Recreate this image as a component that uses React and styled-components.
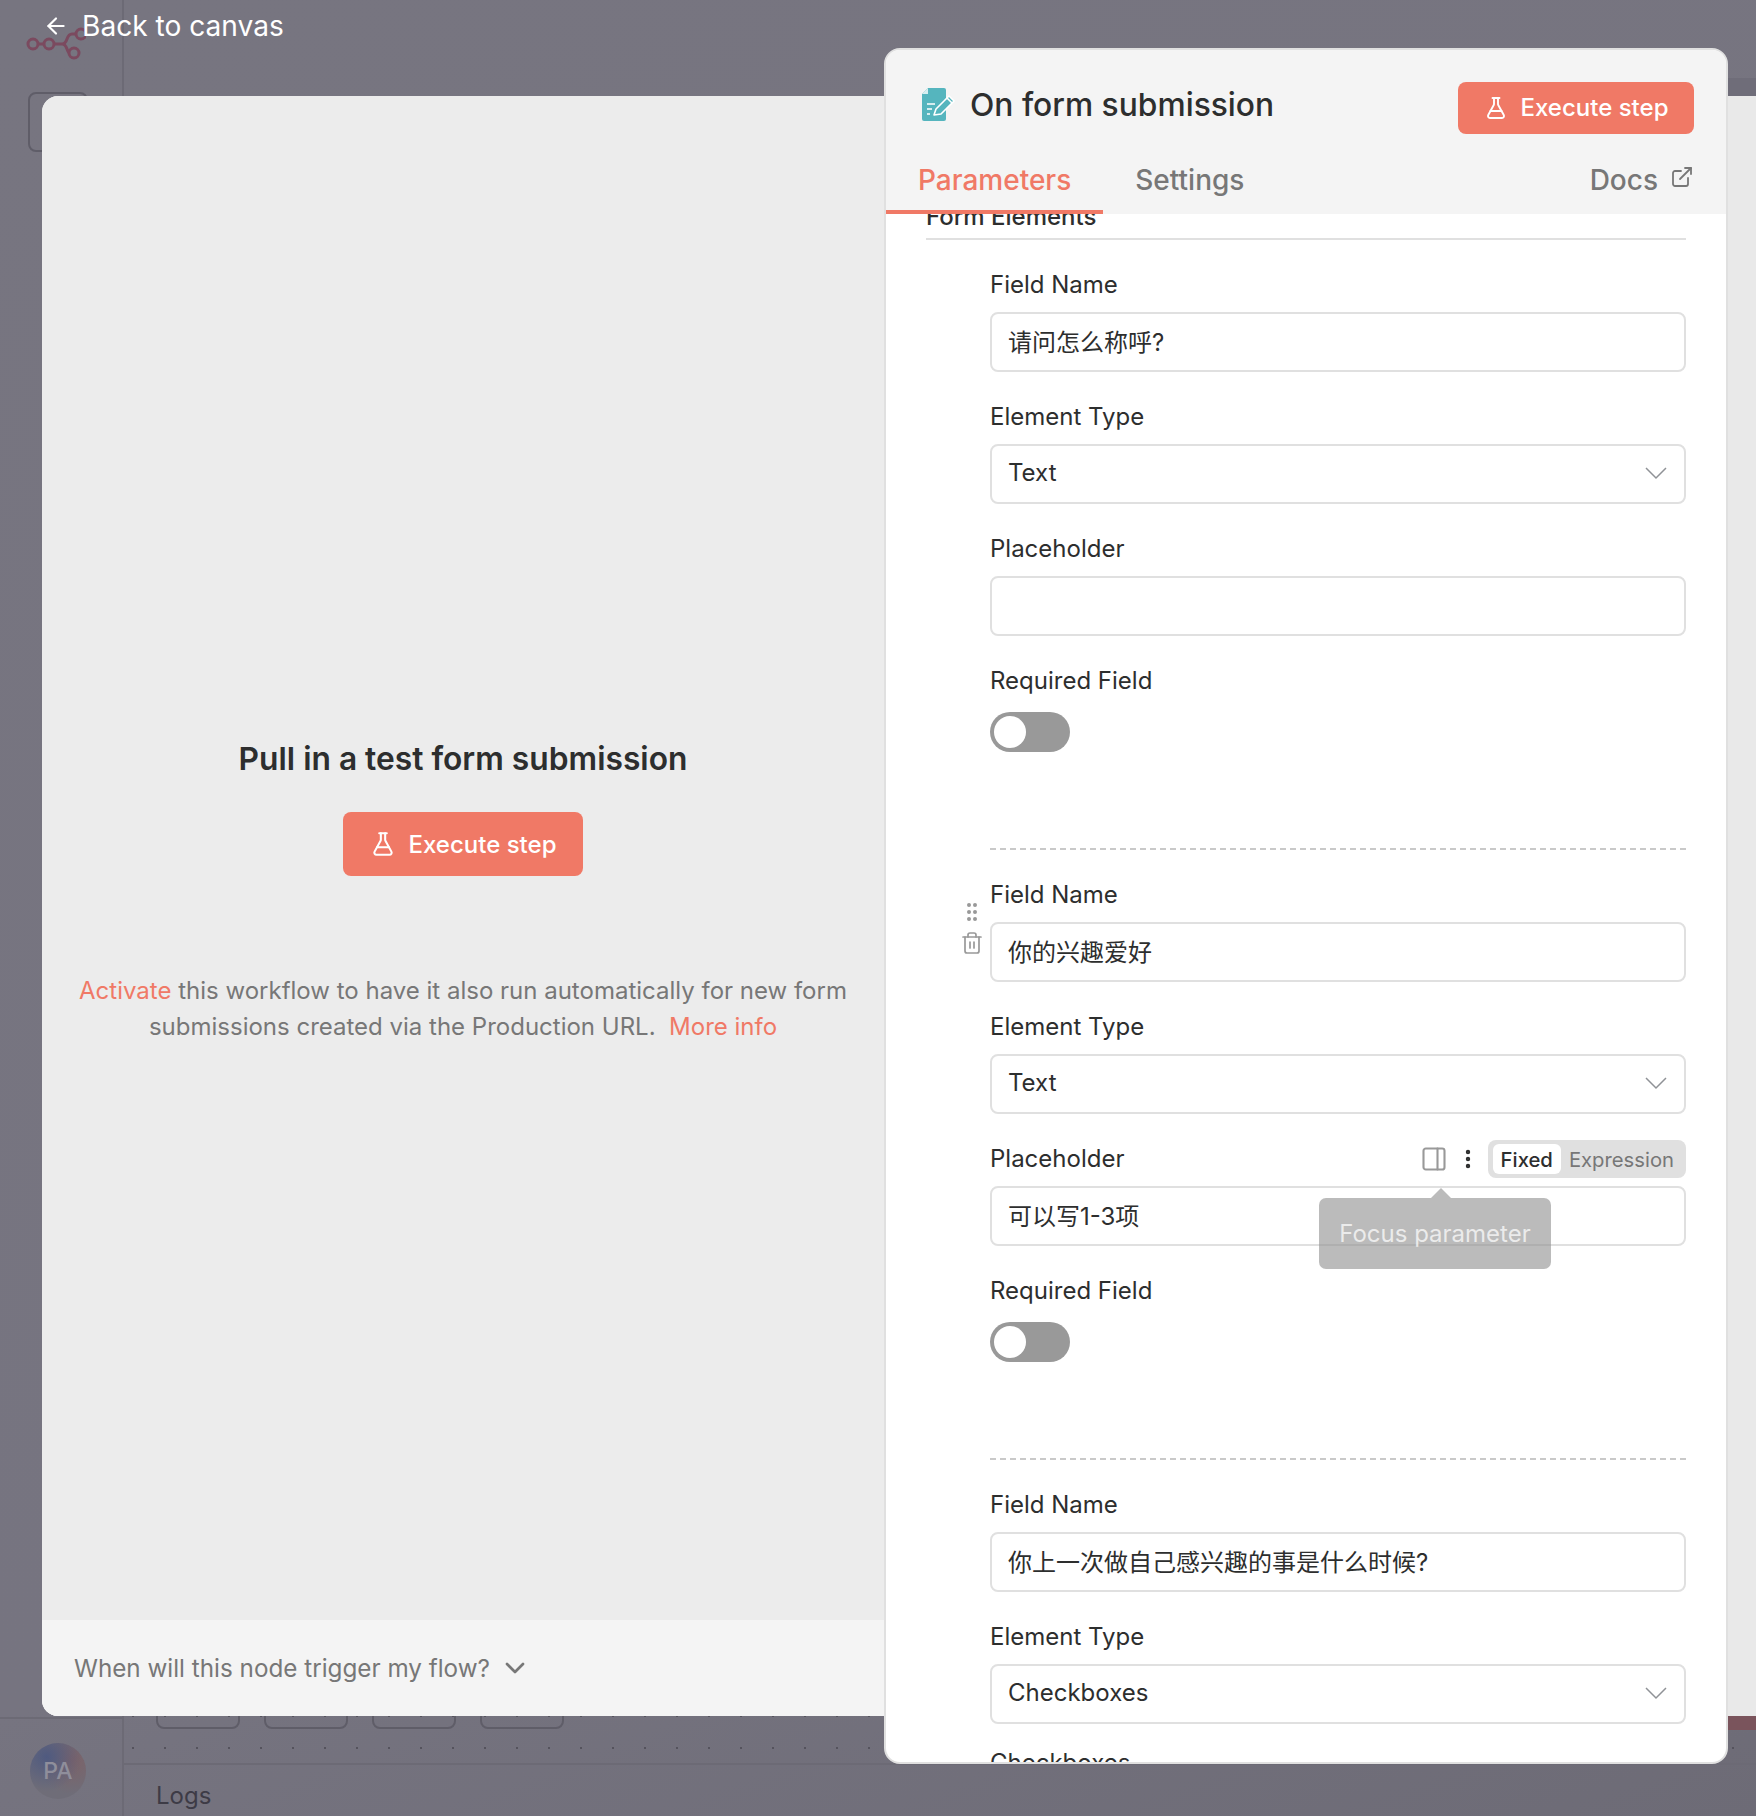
import React from 'react';
import styled, { createGlobalStyle } from 'styled-components';
import { ArrowLeft, ChevronDown, EllipsisVertical, ExternalLink, FlaskConical, GripVertical, PanelRight, Trash2 } from 'lucide-react';

const GlobalStyle = createGlobalStyle`
html, body {
    margin: 0;
    padding: 0;
}
body {
    font-family: Inter, "Noto Sans CJK SC", sans-serif;
    color: #2d2e2e;
}
* {
    box-sizing: border-box;
}
`;

const NodeLogo = () => (
    <svg width="60" height="40" viewBox="0 0 60 40" fill="none" stroke="#7b4a5f" strokeWidth="3">
        <circle cx="7" cy="20" r="5" />
        <circle cx="23" cy="20" r="5" />
        <circle cx="55" cy="10" r="5" />
        <circle cx="48" cy="29" r="5" />
        <path d="M12 20h6M28 20h8c3 0 4-2 5-5s2-5 5-5h4M36 20c3 0 4 2 5 5s2 4 3 4" />
    </svg>
);

const FormIcon = () => (
    <svg width="34" height="34" viewBox="0 0 34 34">
        <path d="M7 1h16a2 2 0 0 1 2 2v29a2 2 0 0 1-2 2H3a2 2 0 0 1-2-2V7z" fill="#55b5be" />
        <path d="M7 1v6H1z" fill="#d7eef0" />
        <path d="M6 17h8M6 22h5M6 27h3" stroke="#fff" strokeWidth="1.6" fill="none" />
        <path d="M13 28l2-6 13-13 5 5-13 13z" fill="#55b5be" stroke="#fff" strokeWidth="1.6" strokeLinejoin="round" />
        <path d="M26 11l5 5" stroke="#fff" strokeWidth="1.6" />
    </svg>
);

const SelectArrow = () => (
    <svg width="24" height="14" viewBox="0 0 24 14" fill="none" stroke="#8f9296" strokeWidth="1.5">
        <path d="M2 2l10 10L22 2" />
    </svg>
);

const ParamField = ({ label, value, extra, children }) => (
    <Field>
        <LabelRow>
            <FieldLabel>{label}</FieldLabel>
            {extra}
        </LabelRow>
        {children || <TextBox>{value}</TextBox>}
    </Field>
);

const SelectField = ({ label, value }) => (
    <ParamField label={label}>
        <SelectBox>
            {value}
            <SelectArrow />
        </SelectBox>
    </ParamField>
);

const RequiredField = () => (
    <Field>
        <LabelRow>
            <FieldLabel>Required Field</FieldLabel>
        </LabelRow>
        <Toggle>
            <Knob />
        </Toggle>
    </Field>
);

const ExecuteButton = ({ big }) => (
    <RunButton $big={big}>
        <FlaskConical size={big ? 26 : 24} strokeWidth={1.9} />
        Execute step
    </RunButton>
);

const App = () => {
    return (
        <Page>
            <GlobalStyle />

            <Shell>
                <Sidebar>
                    <SideTop>
                        <LogoSlot><NodeLogo /></LogoSlot>
                        <SideBox />
                    </SideTop>
                    <SideBottom>
                        <Avatar>PA</Avatar>
                    </SideBottom>
                </Sidebar>
                <Main>
                    <TopBar />
                    <Canvas>
                        <CanvasButton />
                        <CanvasButton />
                        <CanvasButton />
                        <CanvasButton />
                    </Canvas>
                    <LogsBar>Logs</LogsBar>
                </Main>
            </Shell>

            <HeaderBand />
            <RedStrip />

            <BackLink>
                <ArrowLeft size={26} strokeWidth={2} />
                Back to canvas
            </BackLink>

            <Modal>
                <InputPane>
                    <InputBody>
                        <PaneTitle>Pull in a test form submission</PaneTitle>
                        <ExecuteButton big />
                        <PaneText>
                            <Coral>Activate</Coral> this workflow to have it also run automatically for new form
                            submissions created via the Production URL.&nbsp; <Coral>More info</Coral>
                        </PaneText>
                    </InputBody>
                    <InputFooter>
                        When will this node trigger my flow?
                        <ChevronDown size={32} strokeWidth={2} />
                    </InputFooter>
                </InputPane>
            </Modal>

            <Panel>
                <PanelHead>
                    <TitleRow>
                        <NodeTitle>
                            <FormIcon />
                            On form submission
                        </NodeTitle>
                        <ExecuteButton />
                    </TitleRow>
                    <Tabs>
                        <Tab $active>Parameters</Tab>
                        <Tab>Settings</Tab>
                        <DocsTab>
                            Docs
                            <ExternalLink size={24} strokeWidth={1.8} />
                        </DocsTab>
                    </Tabs>
                </PanelHead>

                <PanelBody>
                    <SectionTitle>Form Elements</SectionTitle>

                    <Group>
                        <ParamField label="Field Name" value="请问怎么称呼?" />
                        <SelectField label="Element Type" value="Text" />
                        <ParamField label="Placeholder" value="" />
                        <RequiredField />
                    </Group>

                    <Group $divided>
                        <GroupTools>
                            <GripVertical size={24} color="#999" fill="#999" strokeWidth={2} />
                            <Trash2 size={24} color="#999" strokeWidth={1.7} />
                        </GroupTools>
                        <ParamField label="Field Name" value="你的兴趣爱好" />
                        <SelectField label="Element Type" value="Text" />
                        <ParamField
                            label="Placeholder"
                            extra={
                                <Options>
                                    <PanelRight size={28} color="#999" strokeWidth={1.8} />
                                    <EllipsisVertical size={24} color="#2d2e2e" strokeWidth={2.4} />
                                    <ModeSwitch>
                                        <ModeOption $active>Fixed</ModeOption>
                                        <ModeOption>Expression</ModeOption>
                                    </ModeSwitch>
                                </Options>
                            }
                        >
                            <TipAnchor>
                                <TextBox>可以写1-3项</TextBox>
                                <Tooltip>Focus parameter</Tooltip>
                            </TipAnchor>
                        </ParamField>
                        <RequiredField />
                    </Group>

                    <Group $divided>
                        <ParamField label="Field Name" value="你上一次做自己感兴趣的事是什么时候?" />
                        <SelectField label="Element Type" value="Checkboxes" />
                        <LastField>
                            <LabelRow>
                                <FieldLabel>Checkboxes</FieldLabel>
                            </LabelRow>
                        </LastField>
                    </Group>
                </PanelBody>
            </Panel>
        </Page>
    );
};

export default App;


const Page = styled.div`
position: relative;
width: 1756px;
height: 1816px;
overflow: hidden;
background: linear-gradient(160deg, #777580 0%, #767480 70%, #6d6b76 100%);
`;

const Shell = styled.div`
display: flex;
height: 100%;
`;

const Sidebar = styled.aside`
display: flex;
flex-direction: column;
justify-content: space-between;
width: 124px;
border-right: 2px solid #6c6a75;
`;

const SideTop = styled.div`
display: flex;
flex-direction: column;
padding: 24px 0 0 26px;
`;

const LogoSlot = styled.div`
height: 68px;
`;

const SideBox = styled.div`
width: 60px;
height: 60px;
margin-left: 2px;
border: 2px solid #5f5d68;
border-radius: 8px;
`;

const SideBottom = styled.div`
display: flex;
justify-content: center;
height: 99px;
padding: 24px 6px 0 0;
border-top: 2px solid #6c6a75;
`;

const Avatar = styled.div`
display: flex;
align-items: center;
justify-content: center;
width: 56px;
height: 56px;
border-radius: 50%;
background: radial-gradient(circle at 30% 25%, #4f5a80, transparent 60%), radial-gradient(circle at 75% 30%, #7c6268, transparent 60%), #6f6d78;
color: #8f8e9b;
font-size: 23px;
font-weight: 500;
`;

const Main = styled.main`
flex: 1;
display: flex;
flex-direction: column;
`;

const TopBar = styled.div`
flex: none;
height: 96px;
`;

const Canvas = styled.div`
flex: 1;
display: flex;
align-items: flex-end;
gap: 24px;
padding: 0 0 34px 32px;
background-image: radial-gradient(circle, #55535d 1px, transparent 1.2px);
background-size: 32px 32px;
background-position: -7px 4px;
`;

const CanvasButton = styled.div`
width: 84px;
height: 60px;
border: 2px solid #5f5d68;
border-radius: 8px;
`;

const LogsBar = styled.div`
display: flex;
align-items: center;
height: 53px;
padding: 10px 0 0 32px;
border-top: 2px solid #6c6a75;
color: #3d3b46;
font-size: 24px;
`;

const HeaderBand = styled.div`
position: absolute;
top: 78px;
right: 0;
width: 40px;
height: 18px;
background: #6f6d79;
`;

const RedStrip = styled.div`
position: absolute;
top: 1716px;
right: 0;
width: 40px;
height: 14px;
background: #7a545c;
`;

const BackLink = styled.div`
position: absolute;
top: 9px;
left: 43px;
display: flex;
align-items: center;
gap: 13px;
color: #fff;
font-size: 28.1px;
line-height: 34px;
`;

const Modal = styled.section`
position: absolute;
top: 96px;
left: 42px;
width: 1760px;
height: 1620px;
border-radius: 16px 0 0 16px;
background: #e9e9e9;
overflow: hidden;
`;

const InputPane = styled.div`
display: flex;
flex-direction: column;
width: 842px;
height: 100%;
background: #ececec;
`;

const InputBody = styled.div`
flex: 1;
display: flex;
flex-direction: column;
align-items: center;
justify-content: flex-start;
padding: 640px 30px 0;
`;

const PaneTitle = styled.h2`
margin: 0 0 30px;
font-size: 31.75px;
line-height: 46px;
font-weight: 600;
color: #2d2e2e;
`;

const RunButton = styled.button`
display: flex;
align-items: center;
justify-content: center;
gap: 13px;
width: ${({ $big }) => ($big ? '240px' : '236px')};
height: ${({ $big }) => ($big ? '64px' : '52px')};
margin-top: ${({ $big }) => ($big ? '0' : '7px')};
border: 0;
border-radius: 8px;
background: #f07966;
color: #fff;
font-family: inherit;
font-size: 24px;
font-weight: 500;
`;

const PaneText = styled.p`
margin: 97px 0 0;
text-align: center;
color: #777;
font-size: 24px;
line-height: 36px;
`;

const Coral = styled.span`
color: #f07966;
`;

const InputFooter = styled.div`
display: flex;
align-items: center;
gap: 9px;
height: 96px;
padding: 0 0 0 32px;
background: #f4f4f4;
color: #777;
font-size: 24.25px;
`;

const Panel = styled.section`
position: absolute;
top: 48px;
left: 884px;
display: flex;
flex-direction: column;
width: 844px;
height: 1716px;
border: 2px solid #e0e0e0;
border-radius: 16px;
background: #fff;
overflow: hidden;
`;

const PanelHead = styled.header`
flex: none;
height: 164px;
background: #f4f4f4;
`;

const TitleRow = styled.div`
display: flex;
align-items: center;
justify-content: space-between;
height: 106px;
padding: 2px 32px 0 35px;
`;

const NodeTitle = styled.div`
display: flex;
align-items: center;
gap: 15px;
font-size: 31.75px;
font-weight: 450;
color: #2d2e2e;
`;

const Tabs = styled.nav`
display: flex;
align-items: stretch;
height: 58px;
padding: 0 32px 0 0;
`;

const Tab = styled.div`
display: flex;
align-items: center;
padding: 0 32px 6px;
border-bottom: 4px solid ${({ $active }) => ($active ? '#f07966' : 'transparent')};
color: ${({ $active }) => ($active ? '#f07966' : '#777')};
font-size: 28px;
font-weight: 450;
`;

const DocsTab = styled.div`
display: flex;
align-items: center;
gap: 12px;
margin-left: auto;
padding-bottom: 10px;
color: #777;
font-size: 28px;
font-weight: 450;

svg {
    margin-top: -6px;
}
`;

const PanelBody = styled.div`
flex: 1;
min-height: 0;
overflow: hidden;
padding: 0 40px 0 40px;
`;

const SectionTitle = styled.div`
height: 35px;
margin-top: -9px;
border-bottom: 2px solid #e0e0e0;
font-size: 24px;
line-height: 24px;
font-weight: 500;
color: #2d2e2e;
`;

const Group = styled.div`
position: relative;
display: flex;
flex-direction: column;
gap: 30px;
margin-left: 64px;
padding: 30px 0 96px;
border-top: ${({ $divided }) => ($divided ? '2px dashed #c9c9c9' : '0')};
`;

const GroupTools = styled.div`
position: absolute;
top: 50px;
left: -30px;
display: flex;
flex-direction: column;
align-items: center;
gap: 7px;
width: 24px;
`;

const Field = styled.div`
display: flex;
flex-direction: column;
gap: 14px;
`;

const LastField = styled(Field)`
margin-top: -6px;
`;

const LabelRow = styled.div`
display: flex;
align-items: center;
justify-content: space-between;
height: 28px;
padding-top: 2px;
`;

const FieldLabel = styled.label`
font-size: 24px;
line-height: 28px;
color: #2d2e2e;
`;

const TextBox = styled.div`
display: flex;
align-items: center;
height: 60px;
padding: 0 16px 3px;
border: 2px solid #e0e0e0;
border-radius: 8px;
background: #fff;
font-size: 24px;
color: #2d2e2e;
`;

const SelectBox = styled(TextBox)`
justify-content: space-between;
`;

const Toggle = styled.div`
display: flex;
align-items: center;
width: 80px;
height: 40px;
margin-top: 4px;
padding: 0 4px;
border-radius: 20px;
background: #999;
`;

const Knob = styled.div`
width: 32px;
height: 32px;
border-radius: 50%;
background: #fff;
`;

const Options = styled.div`
display: flex;
align-items: center;
gap: 8px;
`;

const ModeSwitch = styled.div`
display: flex;
align-items: center;
height: 38px;
padding: 0 12px 0 5px;
border-radius: 8px;
background: #e0e0e0;
font-size: 20.25px;
`;

const ModeOption = styled.div`
display: flex;
align-items: center;
height: 30px;
padding: ${({ $active }) => ($active ? '0 8px' : '0 0 0 8px')};
border-radius: 6px;
background: ${({ $active }) => ($active ? '#fff' : 'transparent')};
color: ${({ $active }) => ($active ? '#2d2e2e' : '#777')};
font-weight: ${({ $active }) => ($active ? 500 : 400)};
`;

const TipAnchor = styled.div`
position: relative;
`;

const Tooltip = styled.div`
position: absolute;
top: 12px;
left: 329px;
display: flex;
align-items: center;
justify-content: center;
width: 232px;
height: 71px;
border-radius: 7px;
background: rgba(145, 145, 145, 0.62);
color: rgba(255, 255, 255, 0.72);
font-size: 24px;

&::before {
    content: '';
    position: absolute;
    top: -10px;
    left: 112px;
    border: 10px solid transparent;
    border-top: 0;
    border-bottom-color: rgba(145, 145, 145, 0.62);
}
`;
